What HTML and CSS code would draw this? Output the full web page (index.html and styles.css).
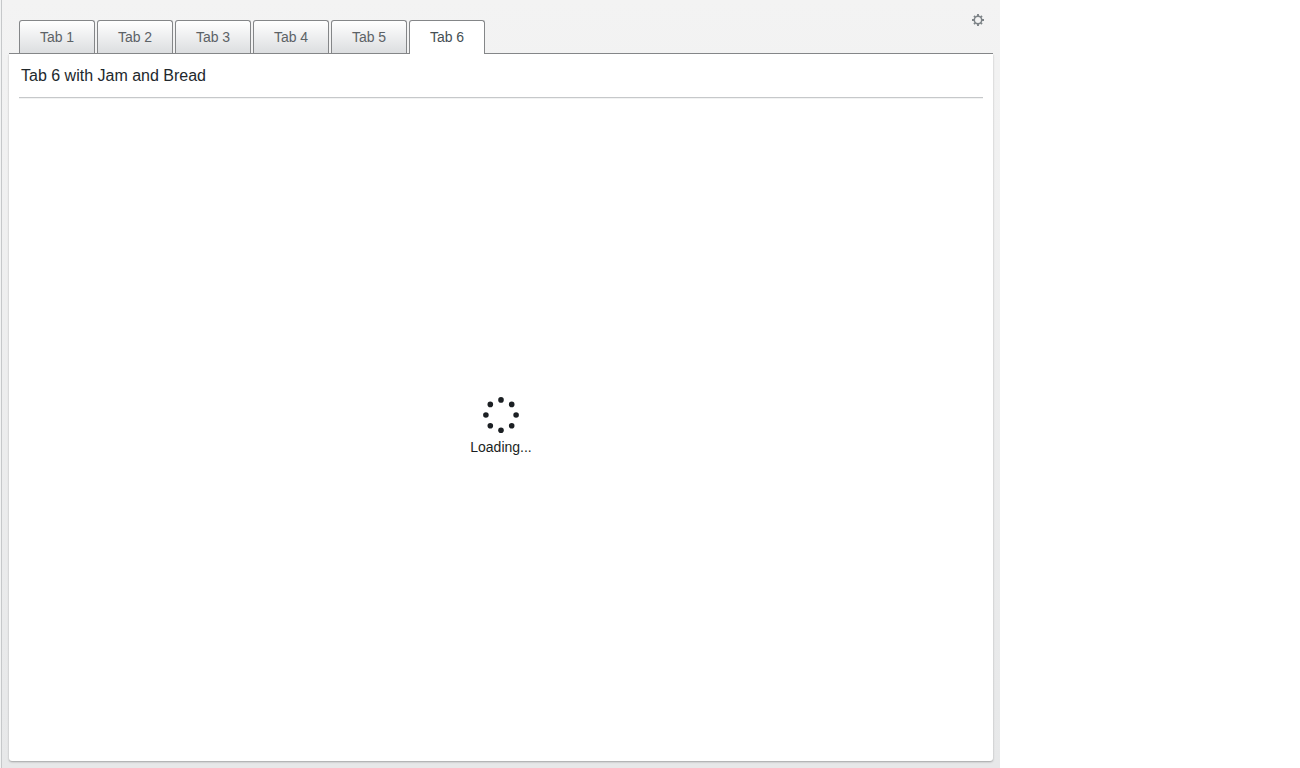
FILE: index.html
```html
<!DOCTYPE html>
<html lang="en">
<head>
<meta charset="utf-8">
<title>Tabs</title>
<link rel="stylesheet" href="styles.css">
</head>
<body>
<main class="app">
  <header class="tabbar">
    <nav class="tabs">
      <a class="tab">Tab 1</a>
      <a class="tab">Tab 2</a>
      <a class="tab">Tab 3</a>
      <a class="tab">Tab 4</a>
      <a class="tab">Tab 5</a>
      <a class="tab tab-active">Tab 6</a>
    </nav>
    <svg class="gear" viewBox="0 0 12 12" width="12" height="12" fill="none" stroke="#7d8387">
      <circle cx="6" cy="6" r="3.7" stroke-width="1.5"/>
      <path d="M6 0v2M6 10v2M0 6h2M10 6h2M2 2l1.2 1.2M8.8 8.8L10 10M10 2L8.8 3.2M3.2 8.8L2 10" stroke-width="1.9"/>
    </svg>
  </header>
  <section class="panel">
    <h1 class="title">Tab 6 with Jam and Bread</h1>
    <div class="loading">
      <svg class="spinner" viewBox="0 0 36 36" width="36" height="36" fill="#1b1f23">
        <circle cx="18" cy="2.9" r="2.8"/>
        <circle cx="28.7" cy="7.4" r="2.8"/>
        <circle cx="33.1" cy="18" r="2.8"/>
        <circle cx="28.7" cy="28.8" r="2.8"/>
        <circle cx="18" cy="33.2" r="2.8"/>
        <circle cx="7.3" cy="28.8" r="2.8"/>
        <circle cx="2.9" cy="18" r="2.8"/>
        <circle cx="7.3" cy="7.4" r="2.8"/>
      </svg>
      <span class="loading-text">Loading...</span>
    </div>
  </section>
</main>
</body>
</html>
```
FILE: styles.css
```css
* { box-sizing: border-box; }
body {
  margin: 0;
  background: #fff;
  font-family: "Liberation Sans", Arial, sans-serif;
}
.app {
  display: flex;
  flex-direction: column;
  width: 999px;
  height: 768px;
  margin-left: 1px;
  padding: 0 7px 7px;
  border-left: 1px solid #c6c8ca;
  background: linear-gradient(#f3f3f3, #e7e8e9);
  box-shadow: -1px 0 #f2f3f3;
}
.tabbar {
  display: flex;
  justify-content: space-between;
  height: 54px;
  padding: 20px 9px 0 10px;
  border-bottom: 1px solid #848688;
}
.tabs {
  display: flex;
  gap: 2px;
  height: 33px;
}
.tab {
  width: 76px;
  height: 33px;
  border: 1px solid #848688;
  border-bottom: 0;
  border-radius: 3px 3px 0 0;
  background: linear-gradient(#fff, #dcdee0);
  color: #5c6266;
  font-size: 14px;
  line-height: 33px;
  text-align: center;
}
.tab-active {
  height: 34px;
  background: #fff;
  color: #454f54;
}
.gear {
  margin-top: -6px;
}
.panel {
  display: flex;
  flex-direction: column;
  flex: 1;
  padding: 0 10px;
  border-radius: 0 0 3px 3px;
  background: #fff;
  box-shadow: 0 1px 2px rgba(0, 0, 0, 0.3);
  clip-path: inset(0 -4px -4px);
}
.title {
  height: 44px;
  margin: 0;
  padding-left: 2px;
  border-bottom: 1px solid #c6c8ca;
  box-shadow: 0 1px #f2f3f3;
  color: #22282c;
  font-size: 16px;
  font-weight: 400;
  line-height: 43px;
}
.loading {
  display: flex;
  flex: 1;
  flex-direction: column;
  align-items: center;
  padding-top: 299px;
}
.loading-text {
  margin-top: 6px;
  color: #1b1f23;
  font-size: 14px;
  line-height: 16px;
}
```
